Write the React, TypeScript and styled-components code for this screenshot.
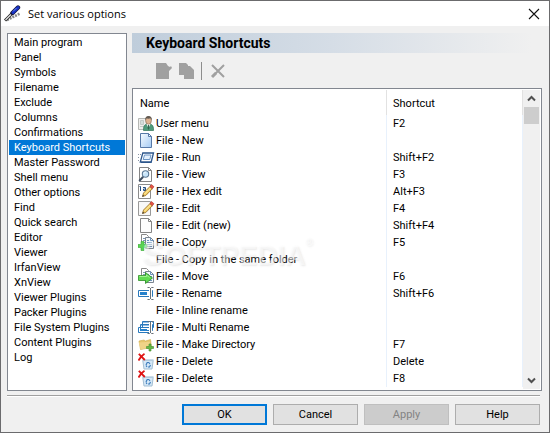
import React, { useState } from "react";
import styled, { createGlobalStyle, css } from "styled-components";

const GlobalStyle = createGlobalStyle`
  *, *::before, *::after { box-sizing: border-box; }
  body { margin: 0; background: #f0f0f0; }
  button { font: inherit; color: inherit; margin: 0; padding: 0; }
`;

const Dialog = styled.div`
  display: flex;
  flex-direction: column;
  min-height: 100vh;
  border: 1px solid #6b6b6d;
  background: #f0f0f0;
  color: #000;
  font-family: Roboto, "Liberation Sans", Arial, sans-serif;
  font-size: 11px;
  line-height: 15px;
`;

const TitleBar = styled.header`
  display: flex;
  align-items: center;
  height: 25px;
  padding: 0 9px 0 3px;
  background: #fff;
`;

const TitleText = styled.h1`
  flex: 1;
  margin: 0 0 0 7px;
  font-family: "Open Sans", "Noto Sans", sans-serif;
  font-size: 11px;
  line-height: 16px;
  font-weight: 400;
`;

const CloseButton = styled.button`
  display: flex;
  align-items: center;
  justify-content: center;
  width: 12px;
  height: 12px;
  border: 0;
  background: none;
`;

const Body = styled.main`
  display: flex;
  flex: 1;
  gap: 5px;
  padding: 7px 7px 4px 6px;
`;

const inset = css`
  border: 1px solid #828790;
  background: #fff;
`;

const PageList = styled.nav`
  ${inset}
  display: flex;
  flex-direction: column;
  flex: none;
  width: 120px;
  padding: 1px;
`;

const PageItem = styled.button<{ $selected: boolean }>`
  height: 15px;
  padding: 0 0 0 5px;
  border: 0;
  text-align: left;
  white-space: nowrap;
  background: ${(p) => (p.$selected ? "#0078d7" : "transparent")};
  color: ${(p) => (p.$selected ? "#fff" : "#000")};
`;

const Content = styled.section`
  display: flex;
  flex-direction: column;
  flex: 1;
  min-width: 0;
`;

const Heading = styled.h2`
  height: 20px;
  margin: 0 10px 0 0;
  padding: 0 0 0 14px;
  font-size: 14px;
  line-height: 20px;
  font-weight: 700;
  background: linear-gradient(to right, #bfcddb, #d5dde6 50%, #f0f0f0);
`;

const Toolbar = styled.div`
  display: flex;
  align-items: center;
  height: 35px;
  padding: 0 0 0 23px;
`;

const ToolButton = styled.button`
  display: flex;
  width: 23px;
  height: 18px;
  border: 0;
  background: none;
`;

const ToolSeparator = styled.span`
  width: 1px;
  height: 18px;
  margin: 0 8px 0 0;
  background: #8d8d8d;
`;

const ListFrame = styled.div`
  ${inset}
  display: flex;
  flex: 1;
  padding: 1px;
`;

const ListArea = styled.div`
  position: relative;
  flex: 1;
`;

const Table = styled.table`
  width: 100%;
  border-collapse: collapse;
  table-layout: fixed;
`;

const HeaderCell = styled.th<{ $width?: string }>`
  width: ${(p) => p.$width ?? "auto"};
  height: 25px;
  padding: 2px 6px 0;
  border-right: 1px solid #e2e2e2;
  text-align: left;
  font-weight: 400;
`;

const Cell = styled.td`
  height: 17px;
  padding: 0 6px;
  border-right: 1px solid #e8f1fc;
  white-space: nowrap;
`;

const NameCell = styled(Cell)`
  padding: 0 0 0 4px;
`;

const NameContent = styled.div`
  display: flex;
  align-items: center;
  gap: 1px;
  height: 17px;
`;

const IconSlot = styled.span`
  display: flex;
  width: 17px;
  height: 17px;
`;

const Watermark = styled.div`
  position: absolute;
  left: 8px;
  top: 148px;
  color: rgba(255, 255, 255, 0.5);
  font-family: "Liberation Sans", Arial, sans-serif;
  font-size: 28px;
  line-height: 32px;
  font-weight: 700;
  text-shadow: 1px 1px 2px rgba(120, 120, 120, 0.16);
  white-space: nowrap;
  pointer-events: none;
`;

const WatermarkInitial = styled.span`
  font-size: 33px;
`;

const WatermarkMark = styled.sup`
  font-size: 10px;
  line-height: 10px;
  vertical-align: top;
`;

const ScrollBar = styled.div`
  display: flex;
  flex-direction: column;
  width: 17px;
  padding: 0 1px;
  background: #f0f0f0;
`;

const ScrollArrow = styled.button`
  display: flex;
  align-items: center;
  justify-content: center;
  height: 17px;
  border: 0;
  background: #f0f0f0;
`;

const ScrollTrack = styled.div`
  flex: 1;
`;

const ScrollThumb = styled.div`
  height: 17px;
  background: #cdcdcd;
`;

const Divider = styled.hr`
  width: auto;
  height: 2px;
  margin: 0 9px 0 6px;
  border: 0;
  border-top: 1px solid #a0a0a0;
  border-bottom: 1px solid #fff;
`;

const Footer = styled.footer`
  display: flex;
  justify-content: flex-end;
  gap: 6px;
  padding: 7px 9px;
`;

const ActionButton = styled.button<{ $primary?: boolean }>`
  width: 85px;
  height: 21px;
  border: ${(p) => (p.$primary ? "2px solid #0078d7" : "1px solid #adadad")};
  background: #e1e1e1;

  &:disabled {
    border-color: #bfbfbf;
    background: #cccccc;
    color: #838383;
  }
`;

type IconName =
  | "user" | "new" | "run" | "view" | "hex" | "edit" | "blank" | "copy"
  | "move" | "rename" | "multi" | "folder" | "delete" | "none";

const Sheet = ({ fill = "#fff", stroke = "#858585" }: { fill?: string; stroke?: string }) => (
  <path d="M2.5 1.5h8l3 3v11h-11z M10.500 1.500v3h3" fill={fill} stroke={stroke} />
);

const Pencil = () => (
  <>
    <path d="M4.500 13.500l1-3.500 6.500-6.500 2.400 2.200-6.600 6.800z" fill="#f5cf68" stroke="#94691f" strokeWidth=".8" />
    <path d="M6.500 11l6.300-6.400" stroke="#fff1a8" />
    <path d="M11.800 3.500l1.700-2 2.500 2.300-1.800 2z" fill="#e65345" stroke="#a92f25" strokeWidth=".6" />
    <path d="M4.300 13.800l.6-2 1.300 1.300z" fill="#333" />
  </>
);

const TwoSheets = () => (
  <>
    <path d="M3.500 .5h5l2 2v9h-7z" fill="#fff" stroke="#888" />
    <path d="M5 4.500h3M5 6.500h3M5 8.500h3" stroke="#7b96b4" />
    <path d="M7.500 3.500h5l3 3v8h-8z" fill="#f4f8fc" stroke="#7b8590" />
    <path d="M12.500 3.500v3h3M9 6.500h2M9 8.500h5M9 10.500h5M9 12.500h5" fill="none" stroke="#6b92bb" />
  </>
);

const Caret = () => (
  <>
    <path d="M12.500 3v11" stroke="#fff" strokeWidth="3" />
    <path d="M9.500 2.500h2l1 1 1-1h2M12.500 3v11M9.500 14.500h2l1-1 1 1h2" stroke="#6b7177" />
  </>
);

const art: Record<IconName, React.ReactNode> = {
  none: null,
  user: (
    <>
      <path d="M.5 3.500h9v11h-9z" fill="#eeeeec" stroke="#b5b7b4" />
      <path d="M2.500 5.500h3v4h-3zM2 11.500h4" fill="#d5dedb" stroke="#c3c9c6" />
      <path d="M5.500 15.500v-2q0-3.500 3-4.500h4q3 1 3 4.500v2z" fill="#4f9b7b" stroke="#33765a" strokeWidth=".7" />
      <path d="M8.500 9l2 4.500 1.900-4.500z" fill="#fff" />
      <path d="M10 10h1l.5 3-1 2-1-2z" fill="#35664f" />
      <ellipse cx="10.500" cy="5.500" rx="2.900" ry="3.800" fill="#dfb391" stroke="#79624e" strokeWidth=".6" />
      <path d="M7.300 5.500Q6.800 1 10.500 1t3.300 4.500l-1.200-2.200q-2.500.8-4.200 0z" fill="#625a52" />
    </>
  ),
  new: (
    <>
      <defs>
        <linearGradient id="newSheet" x1="0" y1="0" x2="1" y2="1">
          <stop offset="0" stopColor="#f8fcff" />
          <stop offset="1" stopColor="#a4caf4" />
        </linearGradient>
      </defs>
      <Sheet fill="url(#newSheet)" stroke="#5779a8" />
    </>
  ),
  run: (
    <>
      <path d="M0 5.500h3M0 8.500h2M0 11.500h1" stroke="#8793a4" strokeDasharray="1 1" />
      <path d="M4.800 4h10.700l-2.300 9H2.300z" fill="#fff" stroke="#2c568c" strokeWidth="1.300" />
      <path d="M6.500 6h6.500l-1.200 4.500H5.200z" fill="#e3effb" stroke="#5c89be" strokeWidth=".9" />
      <path d="M3 13.500h10.500" stroke="#2c568c" />
    </>
  ),
  view: (
    <>
      <path d="M1.500 1.500h9l3 3v11h-12z M10.500 1.500v3h3" fill="#fff" stroke="#858585" />
      <path d="M5.200 10.800L1.200 15" stroke="#3f4f63" strokeWidth="2" />
      <circle cx="7.500" cy="8" r="3.200" fill="#c8e5fa" stroke="#5d7894" strokeWidth="1.100" />
      <path d="M5.900 7.500q.5-1.300 1.800-1.300" stroke="#fff" />
    </>
  ),
  hex: (
    <>
      <path d="M.5 1.500h12v14H.5z" fill="#fff" stroke="#8c8c8c" />
      <path d="M1.500 3.500h1V8M5 4.500h2.500V8M7.500 6H5.500v1.500h2" stroke="#254f82" />
      <Pencil />
    </>
  ),
  edit: (
    <>
      <path d="M.5 1.500h12v14H.5z" fill="#f8f8f8" stroke="#999" />
      <Pencil />
    </>
  ),
  blank: <Sheet fill="#fdfdfd" />,
  copy: (
    <>
      <TwoSheets />
      <path d="M3 7.500h3v3h3v3H6v3H3v-3H0v-3h3z" fill="#5bd353" stroke="#35a931" strokeWidth=".6" />
    </>
  ),
  move: (
    <>
      <TwoSheets />
      <path d="M.5 7.500h7v-3l7 5.500-7 5.500v-3h-7z" fill="#61db51" stroke="#2e8f27" strokeWidth=".8" />
      <path d="M1.500 8.500h7V7l3 2.500" stroke="#a2f393" />
    </>
  ),
  rename: (
    <>
      <path d="M.5 5.500h14v6H.5z" fill="#fff" stroke="#2879bd" />
      <path d="M2 7h7v3H2z" fill="#2581cc" />
      <Caret />
    </>
  ),
  multi: (
    <>
      <path d="M4.500 2.500h11v6h-11zM2.500 5.500h12v6h-12zM.5 8.500h12v5H.5z" fill="#fff" stroke="#2879bd" />
      <path d="M5 3h10M3 6h10" stroke="#2879bd" />
      <path d="M2 10h7v2H2z" fill="#2581cc" />
      <Caret />
    </>
  ),
  folder: (
    <>
      <path d="M1 5l5-1 1.500 1 5-1.500 1 8-11 2z" fill="#e5c66c" stroke="#cfa94a" strokeWidth=".6" />
      <path d="M.8 6.500l11-.8.8 6-10 1.500z" fill="#efd387" />
      <path d="M11 8h2v2.500h2.500v2H13V15h-2v-2.500H8.500v-2H11z" fill="#66b847" stroke="#408c2a" strokeWidth=".6" />
    </>
  ),
  delete: (
    <>
      <path d="M4.800 7.500h10.400l-1.200 8.500H6z" fill="#d5e8f7" stroke="#a4bfd3" />
      <path d="M4.500 7h11" stroke="#b9cfdf" strokeWidth="1.500" />
      <path d="M8 12l1.200-2.500h1.600l1.200 1.500M12.500 12l-1 2H10M9 14l-1-1.500" stroke="#3f7dbc" strokeWidth="1.200" />
      <path d="M.8 .8l6 6.200M6.500.8Q3 3 .5 7.500" stroke="#df1515" strokeWidth="1.800" />
    </>
  ),
};

const FileIcon = ({ name }: { name: IconName }) => (
  <svg width="17" height="17" viewBox="0 0 17 17" fill="none" aria-hidden="true">
    {art[name]}
  </svg>
);

const pages = [
  "Main program", "Panel", "Symbols", "Filename", "Exclude", "Columns",
  "Confirmations", "Keyboard Shortcuts", "Master Password", "Shell menu",
  "Other options", "Find", "Quick search", "Editor", "Viewer", "IrfanView",
  "XnView", "Viewer Plugins", "Packer Plugins", "File System Plugins",
  "Content Plugins", "Log",
];

const commands: { icon: IconName; name: string; key: string }[] = [
  { icon: "user", name: "User menu", key: "F2" },
  { icon: "new", name: "File - New", key: "" },
  { icon: "run", name: "File - Run", key: "Shift+F2" },
  { icon: "view", name: "File - View", key: "F3" },
  { icon: "hex", name: "File - Hex edit", key: "Alt+F3" },
  { icon: "edit", name: "File - Edit", key: "F4" },
  { icon: "blank", name: "File - Edit (new)", key: "Shift+F4" },
  { icon: "copy", name: "File - Copy", key: "F5" },
  { icon: "none", name: "File - Copy in the same folder", key: "" },
  { icon: "move", name: "File - Move", key: "F6" },
  { icon: "rename", name: "File - Rename", key: "Shift+F6" },
  { icon: "none", name: "File - Inline rename", key: "" },
  { icon: "multi", name: "File - Multi Rename", key: "" },
  { icon: "folder", name: "File - Make Directory", key: "F7" },
  { icon: "delete", name: "File - Delete", key: "Delete" },
  { icon: "delete", name: "File - Delete", key: "F8" },
];

export default function App() {
  const [page, setPage] = useState("Keyboard Shortcuts");

  return (
    <>
      <GlobalStyle />
      <Dialog role="dialog" aria-labelledby="dialog-title">
        <TitleBar>
          <svg width="17" height="17" viewBox="0 0 17 17" fill="none" aria-hidden="true">
            <path d="M3 15l5-2.500 8-4" stroke="#8a8a8a" strokeWidth="2.600" strokeDasharray="2 1" />
            <path d="M1 15.500l7-7" stroke="#222" strokeWidth="3" />
            <path d="M1.500 15l6-6" stroke="#e4e4e4" strokeWidth="1.200" />
            <path d="M8.500 8l5.500-5.500" stroke="#15153c" strokeWidth="4.400" strokeLinecap="round" />
            <path d="M9 7.500l5-5" stroke="#1733c7" strokeWidth="3" strokeLinecap="round" />
            <path d="M9 6.500l3.500-3.500" stroke="#6682e6" />
          </svg>
          <TitleText id="dialog-title">Set various options</TitleText>
          <CloseButton aria-label="Close">
            <svg width="12" height="12" viewBox="0 0 12 12" fill="none" aria-hidden="true">
              <path d="M1 1l10 10M11 1L1 11" stroke="#111" strokeWidth="1.100" />
            </svg>
          </CloseButton>
        </TitleBar>

        <Body>
          <PageList aria-label="Option pages">
            {pages.map((p) => (
              <PageItem
                key={p}
                $selected={p === page}
                aria-current={p === page ? "page" : undefined}
                onClick={() => setPage(p)}
              >
                {p}
              </PageItem>
            ))}
          </PageList>

          <Content>
            <Heading>Keyboard Shortcuts</Heading>
            <Toolbar>
              <ToolButton aria-label="Edit shortcut" disabled>
                <svg width="18" height="18" viewBox="0 0 18 18" aria-hidden="true">
                  <path d="M1 1h10l2 3 2 1 1-1 1 2-3 3v8H1z" fill="#a0a0a0" />
                </svg>
              </ToolButton>
              <ToolButton aria-label="Copy shortcut" disabled>
                <svg width="18" height="18" viewBox="0 0 18 18" aria-hidden="true">
                  <path d="M1 1h7l2 2v1h2l4 4v9H6v-4H1z" fill="#a0a0a0" />
                </svg>
              </ToolButton>
              <ToolSeparator />
              <ToolButton aria-label="Delete shortcut" disabled>
                <svg width="18" height="18" viewBox="0 0 18 18" fill="none" aria-hidden="true">
                  <path d="M2 3l12 12M14 3L3 14" stroke="#a0a0a0" strokeWidth="2" />
                  <path d="M6 11l-4 4" stroke="#a0a0a0" strokeWidth="3" />
                </svg>
              </ToolButton>
            </Toolbar>

            <ListFrame>
              <ListArea>
                <Table>
                  <thead>
                    <tr>
                      <HeaderCell>Name</HeaderCell>
                      <HeaderCell $width="35%">Shortcut</HeaderCell>
                    </tr>
                  </thead>
                  <tbody>
                    {commands.map((c, i) => (
                      <tr key={i}>
                        <NameCell>
                          <NameContent>
                            <IconSlot>
                              <FileIcon name={c.icon} />
                            </IconSlot>
                            {c.name}
                          </NameContent>
                        </NameCell>
                        <Cell>{c.key}</Cell>
                      </tr>
                    ))}
                  </tbody>
                </Table>
                <Watermark aria-hidden="true">
                  <WatermarkInitial>S</WatermarkInitial>OFTPEDIA<WatermarkMark>®</WatermarkMark>
                </Watermark>
              </ListArea>
              <ScrollBar>
                <ScrollArrow aria-label="Scroll up">
                  <svg width="9" height="7" viewBox="0 0 9 7" fill="none" aria-hidden="true">
                    <path d="M1 5.500L4.500 2 8 5.500" stroke="#505050" strokeWidth="2" />
                  </svg>
                </ScrollArrow>
                <ScrollTrack>
                  <ScrollThumb />
                </ScrollTrack>
                <ScrollArrow aria-label="Scroll down">
                  <svg width="9" height="7" viewBox="0 0 9 7" fill="none" aria-hidden="true">
                    <path d="M1 1.500L4.500 5 8 1.500" stroke="#505050" strokeWidth="2" />
                  </svg>
                </ScrollArrow>
              </ScrollBar>
            </ListFrame>
          </Content>
        </Body>

        <Divider />
        <Footer>
          <ActionButton $primary>OK</ActionButton>
          <ActionButton>Cancel</ActionButton>
          <ActionButton disabled>Apply</ActionButton>
          <ActionButton>Help</ActionButton>
        </Footer>
      </Dialog>
    </>
  );
}
